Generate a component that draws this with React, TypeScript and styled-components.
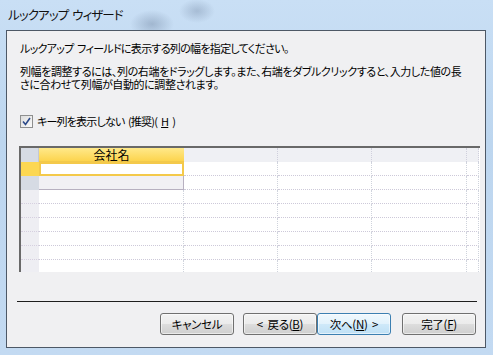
import React from 'react';
import styled, {createGlobalStyle} from 'styled-components';

const GlobalStyle = createGlobalStyle`
  html, body {
    margin: 0;
    padding: 0;
    background: #c3daf1;
  }
  body {
    font-family: "Noto Sans CJK JP", "Noto Sans", sans-serif;
    font-feature-settings: "palt";
    color: #000000;
  }
`;

const Window = styled.div`
  width: 493px;
  height: 355px;
  box-sizing: border-box;
  padding: 0 7px 7px 6px;
  display: flex;
  flex-direction: column;
  background:
    radial-gradient(ellipse 22px 14px at 152px 24px, rgba(90, 110, 140, 0.35), transparent),
    radial-gradient(ellipse 18px 12px at 197px 11px, rgba(90, 110, 140, 0.3), transparent),
    linear-gradient(180deg, #c9dff5 0%, #bdd6ef 40%, #c3daf2 100%);
`;

const TitleBar = styled.div`
  height: 30px;
  flex: none;
  display: flex;
  align-items: center;
  padding: 0 0 2px 2px;
  box-sizing: border-box;
  font-size: 12.5px;
  color: #101010;
  letter-spacing: -0.9px;
  white-space: pre;
`;

const Client = styled.div`
  flex: 1;
  border: 1px solid #4d5866;
  background: #f0f0f2;
  padding: 10px 0 0 12px;
  display: flex;
  flex-direction: column;
  font-size: 11px;
  letter-spacing: -0.4px;
`;

const Line = styled.p`
  margin: 0;
  line-height: 14px;
  white-space: pre;
  margin-left: 1px;
  letter-spacing: -0.7px;
`;

const Paragraph = styled(Line)`
  margin-top: 10px;
  line-height: 13px;
  letter-spacing: -0.4px;
`;

const CheckRow = styled.label`
  margin: 23px 0 0 1px;
  height: 14px;
  display: flex;
  align-items: center;
  gap: 4px;
  white-space: pre;
  letter-spacing: -0.8px;
`;

const CheckBox = styled.span`
  width: 11px;
  height: 11px;
  border: 1px solid #8e8f8f;
  background: linear-gradient(135deg, #dcdcdc, #fbfbfb);
  display: flex;
  align-items: center;
  justify-content: center;
`;

const GridBox = styled.div`
  margin-top: 18px;
  width: 461px;
  height: 126px;
  box-sizing: border-box;
  border-top: 2px solid #696969;
  border-left: 2px solid #696969;
  overflow: hidden;
  display: grid;
  grid-template-columns: 18px 145px 94px 94px 95px 12px;
  grid-auto-rows: 14px;
  background: #ffffff;
`;

type CellKind = 'corner' | 'head' | 'headEmpty' | 'selActive' | 'selNew' | 'sel' | 'active' | 'newRow' | 'data';

const Cell = styled.div<{$kind: CellKind}>`
  box-sizing: border-box;
  font-size: 12px;
  letter-spacing: 0;
  line-height: 13px;
  text-align: center;
  ${({$kind}) => {
    switch ($kind) {
      case 'corner':
        return 'background: #d6dbe4; border-right: 1px solid #c4c8d4;';
      case 'head':
        return 'background: linear-gradient(180deg, #ffe98a, #fcd44e); border-bottom: 1px solid #f2c94a;';
      case 'headEmpty':
        return 'background: #eff0f4; border-right: 1px dotted #cfcfdc;';
      case 'selActive':
        return 'background: #fcd752;';
      case 'selNew':
        return 'background: #d6dbe4;';
      case 'sel':
        return 'background: #eeeef3; border-bottom: 1px dotted #d6d0e0;';
      case 'active':
        return 'background: #ffffff; border: 2px solid #f4c94a;';
      case 'newRow':
        return 'background: #f1f0f4; border-right: 1px solid #b7b0c0; border-bottom: 1px solid #b7b0c0;';
      default:
        return 'background: #ffffff; border-right: 1px dotted #cfd3dc; border-bottom: 1px dotted #cdc9d9;';
    }
  }}
`;

const Separator = styled.div`
  margin: 29px 8px 0 -2px;
  height: 1px;
  background: #1e1e1e;
`;

const ButtonRow = styled.div`
  margin: 11px 9px 0 0;
  display: flex;
  justify-content: flex-end;
`;

const Button = styled.button<{$primary?: boolean; $gap?: number}>`
  width: 74px;
  height: 22px;
  margin-left: ${({$gap}) => $gap ?? 0}px;
  border-radius: 3px;
  border: 1px solid ${({$primary}) => ($primary ? '#3c7fb1' : '#707070')};
  background: ${({$primary}) =>
    $primary
      ? 'linear-gradient(180deg, #f0f8fd 0%, #e1f2fc 50%, #cfe9f9 50%, #bfe0f5 100%)'
      : 'linear-gradient(180deg, #f3f3f3 0%, #ebebeb 50%, #dddddd 50%, #cfcfcf 100%)'};
  box-shadow: inset 0 0 0 1px rgba(255, 255, 255, 0.55);
  font-family: inherit;
  font-feature-settings: "palt";
  font-size: 11.5px;
  letter-spacing: -0.3px;
  color: #000000;
  padding: 0;
  white-space: pre;
`;

const rows: CellKind[][] = [
  ['corner', 'head', 'headEmpty', 'headEmpty', 'headEmpty', 'headEmpty'],
  ['selActive', 'active', 'data', 'data', 'data', 'data'],
  ['selNew', 'newRow', 'data', 'data', 'data', 'data'],
  ...Array.from({length: 6}, (): CellKind[] => ['sel', 'data', 'data', 'data', 'data', 'data']),
];

export default function App() {
  return (
    <>
      <GlobalStyle/>
      <Window>
        <TitleBar>{'ルックアップ  ウィザード'}</TitleBar>
        <Client>
          <Line>{'ルックアップ  フィールドに表示する列の幅を指定してください。'}</Line>
          <Paragraph>
            列幅を調整するには、列の右端をドラッグします。また、右端をダブルクリックすると、入力した値の長<br/>
            さに合わせて列幅が自動的に調整されます。
          </Paragraph>
          <CheckRow>
            <CheckBox>
              <svg width="9" height="9" viewBox="0 0 9 9">
                <path d="M1 4.5 L3.5 7.5 L8 1" fill="none" stroke="#2c4a8a" strokeWidth="1.6"/>
              </svg>
            </CheckBox>
            {'キー列を表示しない  (推奨)('}<u>H</u>)
          </CheckRow>
          <GridBox>
            {rows.map((row, r) =>
              row.map((kind, c) => (
                <Cell key={`${r}-${c}`} $kind={kind}>
                  {r === 0 && c === 1 ? '会社名' : null}
                </Cell>
              ))
            )}
          </GridBox>
          <Separator/>
          <ButtonRow>
            <Button>キャンセル</Button>
            <Button $gap={9}>{'<  戻る('}<u>B</u>)</Button>
            <Button $primary>次へ(<u>N</u>){')  >'.slice(1)}</Button>
            <Button $gap={11}>完了(<u>F</u>)</Button>
          </ButtonRow>
        </Client>
      </Window>
    </>
  );
}
